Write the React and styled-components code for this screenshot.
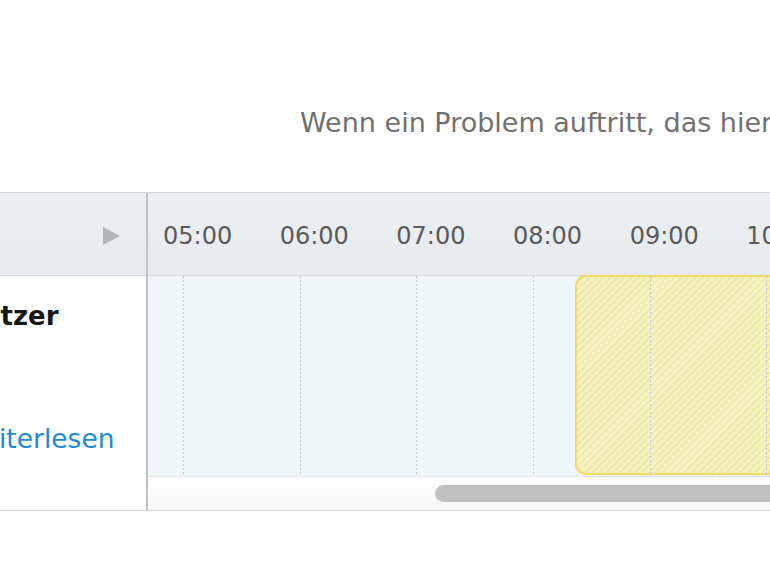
import React from "react";
import styled, { createGlobalStyle } from "styled-components";

const GlobalStyle = createGlobalStyle`
  html, body { margin: 0; padding: 0; background: #ffffff; }
  body {
    font-family: "DejaVu Sans", "Liberation Sans", sans-serif;
    overflow: hidden;
  }
  * { box-sizing: border-box; }
`;

const Page = styled.div`
  width: 770px;
  height: 578px;
  overflow: hidden;
  background: #ffffff;
`;

const Intro = styled.p`
  margin: 0;
  height: 192px;
  padding: 108px 0 0 300px;
  font-size: 27px;
  line-height: 30px;
  color: #707070;
  white-space: nowrap;
  overflow: hidden;
`;

const Table = styled.div`
  display: flex;
  width: 100%;
  border-top: 1px solid #d6d6d6;
  border-bottom: 1px solid #d4d4d4;
`;

const LeftPanel = styled.div`
  flex: 0 0 148px;
  display: flex;
  flex-direction: column;
  border-right: 2px solid #c2c2c2;
  overflow: hidden;
`;

const RightPanel = styled.div`
  flex: 1;
  min-width: 0;
  display: flex;
  flex-direction: column;
  overflow: hidden;
  box-shadow: inset 3px 0 3px -2px rgba(0, 0, 0, 0.12);
`;

const HeaderCell = styled.div`
  height: 83px;
  flex: 0 0 83px;
  display: flex;
  align-items: center;
  justify-content: ${(p) => (p.$end ? "flex-end" : "flex-start")};
  padding: ${(p) => (p.$end ? "4px 26px 0 0" : "4px 0 0 15px")};
  background: linear-gradient(#eceff2, #e7ebee);
  border-bottom: 1px solid #d6dadd;
`;

const TimeLabel = styled.span`
  flex: 0 0 116.67px;
  font-size: 24px;
  line-height: 28px;
  color: #5a5a5a;
  white-space: nowrap;
`;

const LeftBody = styled.div`
  flex: 1;
  background: #ffffff;
  display: flex;
  flex-direction: column;
  gap: 93px;
  padding-top: 25px;
  white-space: nowrap;
`;

const RowTitle = styled.div`
  font-size: 26px;
  line-height: 30px;
  font-weight: bold;
  color: #161616;
  margin-left: ${(p) => p.$shift}px;
`;

const RowLink = styled.a`
  font-size: 26.5px;
  line-height: 30px;
  color: #1d8ad5;
  text-decoration: none;
  margin-left: ${(p) => p.$shift}px;
`;

const Timeline = styled.div`
  position: relative;
  height: 200px;
  background: #f0f5f8;
`;

const Columns = styled.div`
  position: relative;
  z-index: 1;
  display: flex;
  height: 100%;
  padding-left: 35px;
`;

const HourColumn = styled.div`
  flex: 0 0 116.67px;
  height: 100%;
  background-image: repeating-linear-gradient(
    to bottom,
    #c3c8cc 0px,
    #c3c8cc 2px,
    transparent 2px,
    transparent 4px
  );
  background-size: 1px 100%;
  background-repeat: no-repeat;
  background-position: left top;
`;

const Booking = styled.div`
  position: absolute;
  z-index: 0;
  left: 427px;
  top: -1px;
  bottom: 1px;
  width: 400px;
  border: 2px solid #f1da66;
  border-radius: 11px;
  background: repeating-linear-gradient(
    135deg,
    #f5f1c2 0px,
    #f5f1c2 3px,
    #eee8a9 3px,
    #eee8a9 5px
  );
`;

const ScrollTrack = styled.div`
  height: 34px;
  flex: 0 0 34px;
  border-top: 1px solid #e3e3e3;
  background: linear-gradient(#ffffff, #f6f6f6);
  padding: 8px 0 0 287px;
`;

const ScrollThumb = styled.div`
  width: 600px;
  height: 17px;
  border-radius: 9px;
  background: #c1c1c1;
`;

const PlayIcon = () => (
  <svg width="17" height="18" viewBox="0 0 17 18" aria-hidden="true">
    <polygon points="0,0 17,9 0,18" fill="#b5b5b5" />
  </svg>
);

const hours = ["05:00", "06:00", "07:00", "08:00", "09:00", "10:00"];

export default function App() {
  return (
    <Page>
      <GlobalStyle />
      <Intro>Wenn ein Problem auftritt, das hier angezeigt wird</Intro>
      <Table>
        <LeftPanel>
          <HeaderCell $end>
            <PlayIcon />
          </HeaderCell>
          <LeftBody>
            <RowTitle $shift={-74}>Benutzer</RowTitle>
            <RowLink $shift={-42} href="#">
              Weiterlesen
            </RowLink>
          </LeftBody>
        </LeftPanel>
        <RightPanel>
          <HeaderCell>
            {hours.map((h) => (
              <TimeLabel key={h}>{h}</TimeLabel>
            ))}
          </HeaderCell>
          <Timeline>
            <Booking />
            <Columns>
              {hours.map((h) => (
                <HourColumn key={h} />
              ))}
            </Columns>
          </Timeline>
          <ScrollTrack>
            <ScrollThumb />
          </ScrollTrack>
        </RightPanel>
      </Table>
    </Page>
  );
}
